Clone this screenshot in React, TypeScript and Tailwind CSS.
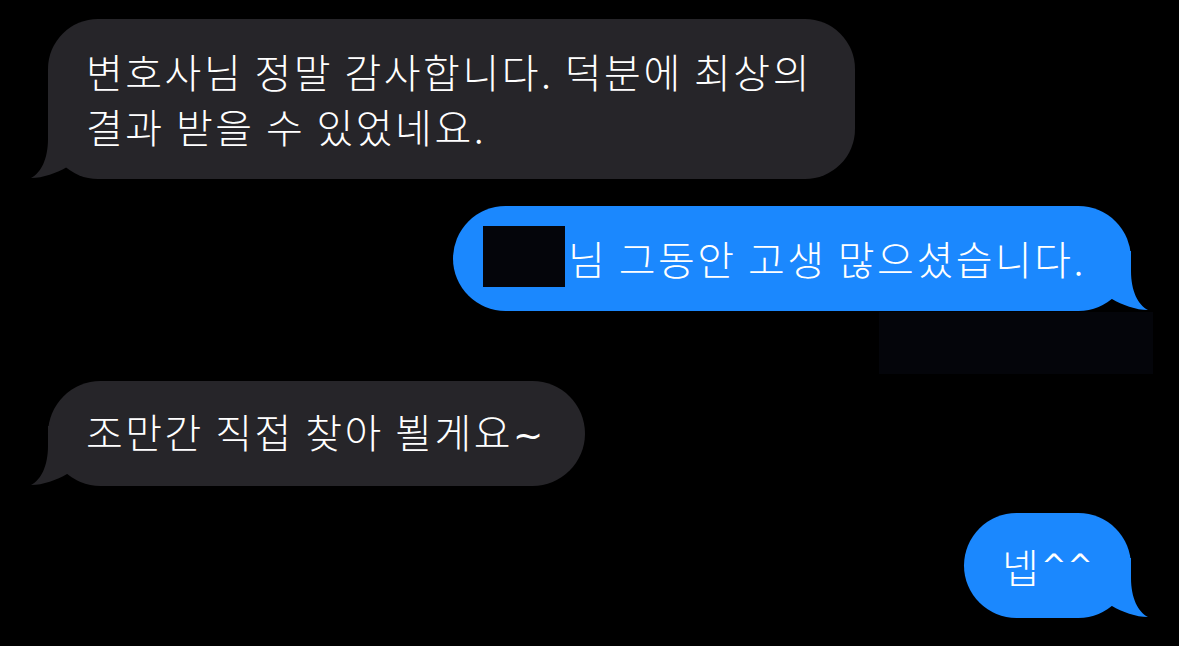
import React from "react";

const GREY = "#262529";
const BLUE = "#1b88fe";

function Tail({ side, color }: { side: "left" | "right"; color: string }) {
  return (
    <svg
      width="60"
      height="60"
      viewBox="0 0 60 60"
      className={
        side === "left"
          ? "absolute bottom-0 left-[-17px]"
          : "absolute bottom-0 right-[-17px] -scale-x-100"
      }
    >
      <path
        d="M17 0 L17 20 C17 40 10 54 0 59 C12 59 26 54 36 48 L60 48 L60 0 Z"
        fill={color}
      />
    </svg>
  );
}

export default function App() {
  return (
    <div
      className="min-h-[646px] w-full bg-black flex flex-col pt-[19px] text-white text-[40px] leading-[55px] font-light tracking-[2.5px]"
      style={{ fontFamily: '"Noto Sans CJK KR", "Noto Sans", sans-serif' }}
    >
      {/* bubble 1 */}
      <div className="flex pl-[48px]">
        <div className="relative w-[807px] h-[160px] rounded-[50px] bg-[#262529] px-[38px] py-[25px]">
          <Tail side="left" color={GREY} />
          <p className="relative whitespace-nowrap">
            변호사님 정말 감사합니다. 덕분에 최상의
            <br />
            결과 받을 수 있었네요.
          </p>
        </div>
      </div>

      {/* bubble 2 */}
      <div className="flex justify-end pr-[48px] mt-[27px]">
        <div className="relative w-[678px] h-[105px] rounded-full bg-[#1b88fe] pl-[30px] flex items-center">
          <Tail side="right" color={BLUE} />
          <div className="relative w-[82px] h-[61px] mb-[4px] bg-[#04050a] shrink-0" />
          <span className="relative ml-[3px] whitespace-nowrap">님 그동안 고생 많으셨습니다.</span>
        </div>
      </div>

      {/* redaction under blue bubble */}
      <div className="flex justify-end pr-[26px] mt-[1px]">
        <div className="w-[274px] h-[62px] bg-[#04050a]" />
      </div>

      {/* bubble 3 */}
      <div className="flex pl-[48px] mt-[7px]">
        <div className="relative w-[537px] h-[105px] rounded-full bg-[#262529] px-[38px] flex items-center">
          <Tail side="left" color={GREY} />
          <span className="relative whitespace-nowrap">
            조만간 직접 찾아 뵐게요
            <span className="font-['DejaVu_Sans'] font-normal text-[36px] tracking-normal">~</span>
          </span>
        </div>
      </div>

      {/* bubble 4 */}
      <div className="flex justify-end pr-[48px] mt-[27px]">
        <div className="relative w-[167px] h-[105px] rounded-full bg-[#1b88fe] px-[38px] flex items-center">
          <Tail side="right" color={BLUE} />
          <span className="relative whitespace-nowrap">
            넵
            <span className="font-['DejaVu_Sans'] font-normal text-[30px] tracking-[1px] align-[7px]">^^</span>
          </span>
        </div>
      </div>
    </div>
  );
}
